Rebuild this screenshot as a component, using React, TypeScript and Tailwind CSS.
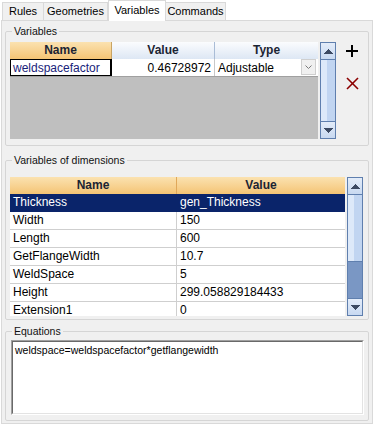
import React from 'react'

const dims: [string, string][] = [
  ['Thickness', 'gen_Thickness'],
  ['Width', '150'],
  ['Length', '600'],
  ['GetFlangeWidth', '10.7'],
  ['WeldSpace', '5'],
  ['Height', '299.058829184433'],
  ['Extension1', '0'],
]

function UpArrow() {
  return (
    <svg width="9" height="5" viewBox="0 0 9 5" shapeRendering="crispEdges">
      <polygon points="4.5,0 9,5 0,5" fill="#3c4a63" />
    </svg>
  )
}

function DownArrow() {
  return (
    <svg width="9" height="5" viewBox="0 0 9 5" shapeRendering="crispEdges">
      <polygon points="0,0 9,0 4.5,5" fill="#3c4a63" />
    </svg>
  )
}

function ScrollButton({ down }: { down?: boolean }) {
  return (
    <div className="h-[16px] shrink-0 flex items-center justify-center bg-linear-to-b from-[#e3ecf9] to-[#c8d9f1] border-[#5f7fae]">
      {down ? <DownArrow /> : <UpArrow />}
    </div>
  )
}

function Thumb({ h }: { h: string }) {
  return (
    <div className={`${h} flex border-y border-[#5f7fae]`}>
      <div className="w-[6px] bg-[#dde9f9]" />
      <div className="flex-1 bg-[#c1d5f1]" />
    </div>
  )
}

function Tab({ label, active, w, first }: { label: string; active?: boolean; w: string; first?: boolean }) {
  if (active)
    return (
      <div className={`${w} h-[21px] -mb-px relative z-10 bg-white border border-b-0 border-[#d9d9d9] flex items-center justify-center text-[11px] text-black pb-[2px]`}>
        {label}
      </div>
    )
  return (
    <div className={`${w} h-[18px] bg-[#f0f0f0] border-t border-r ${first ? 'border-l' : ''} border-[#d9d9d9] flex items-center justify-center text-[11px] text-black`}>
      {label}
    </div>
  )
}

export default function App() {
  return (
    <div className="w-[374px] h-[424px] bg-white overflow-hidden font-['Liberation_Sans',Arial,sans-serif] text-black">
      {/* tabs */}
      <div className="flex items-end h-[20px] pl-[2px]">
        <Tab label="Rules" w="w-[42px]" first />
        <Tab label="Geometries" w="w-[64px]" />
        <Tab label="Variables" w="w-[58px]" active />
        <Tab label="Commands" w="w-[60px]" />
      </div>

      {/* panel */}
      <div className="ml-[1px] w-[372px] h-[404px] border border-[#d9d9d9] bg-[#f0f0f0] px-[3px] pt-[4px]">
        {/* Variables */}
        <fieldset className="border border-[#d5d5d5] rounded-[2px] px-[4px] pt-[5px] pb-[6px]">
          <legend className="ml-[2px] px-[2px] text-[10.5px] leading-[12px] text-[#111]">Variables</legend>
          <div className="flex">
            <div className="w-[308px] h-[97px] bg-[#bfbfbf] flex flex-col">
              <div className="h-[17px] flex text-[12px] font-bold text-[#1b2433] leading-[17px]">
                <div className="w-[102px] text-center bg-linear-to-b from-[#fbe2b0] to-[#f4c474] border-r border-[#c8a464]">Name</div>
                <div className="w-[103px] text-center bg-linear-to-b from-[#fbfcfe] to-[#dde7f4] border-r border-[#a9bcd6]">Value</div>
                <div className="flex-1 text-center bg-linear-to-b from-[#fbfcfe] to-[#dde7f4]">Type</div>
              </div>
              <div className="h-[18px] flex bg-white border-b border-[#a0a0a0] text-[12px] leading-[16px]">
                <div className="w-[102px] border border-r-2 border-black pl-[2px] text-[#18227a]">weldspacefactor</div>
                <div className="w-[103px] border-r border-[#c8c8c8] text-right pr-[3px] pt-px">0.46728972</div>
                <div className="flex-1 flex items-start pl-[3px] pt-px">
                  <span className="flex-1">Adjustable</span>
                  <div className="w-[15px] h-[16px] -mt-px mr-[2px] bg-[#f0f0f0] border border-[#cfcfcf] flex items-center justify-center">
                    <svg width="7" height="4" viewBox="0 0 7 4">
                      <polyline points="0.5,0.5 3.5,3.5 6.5,0.5" fill="none" stroke="#7a7a7a" strokeWidth="1" />
                    </svg>
                  </div>
                </div>
              </div>
            </div>
            <div className="ml-[2px] w-[16px] h-[97px] border border-[#5f7fae] flex flex-col bg-[#c1d5f1]">
              <ScrollButton />
              <Thumb h="flex-1" />
              <ScrollButton down />
            </div>
            <div className="ml-[10px] pt-[3px] flex flex-col">
              <svg width="12" height="12" viewBox="0 0 12 12" shapeRendering="crispEdges">
                <rect x="5" y="0" width="2" height="12" fill="#000" />
                <rect x="0" y="5" width="12" height="2" fill="#000" />
              </svg>
              <svg className="mt-[20px]" width="13" height="13" viewBox="0 0 13 13">
                <line x1="1" y1="1" x2="12" y2="12" stroke="#8b0000" strokeWidth="1.6" />
                <line x1="12" y1="1" x2="1" y2="12" stroke="#8b0000" strokeWidth="1.6" />
              </svg>
            </div>
          </div>
        </fieldset>

        {/* Variables of dimensions */}
        <fieldset className="mt-[8px] border border-[#d5d5d5] rounded-[2px] px-[4px] pt-[11px] pb-[3px]">
          <legend className="ml-[2px] px-[2px] text-[10.5px] leading-[12px] text-[#111]">Variables of dimensions</legend>
          <div className="flex">
            <div className="w-[335px] h-[139px] bg-white flex flex-col overflow-hidden">
              <div className="h-[17px] shrink-0 flex text-[12px] font-bold text-[#1b2433] leading-[17px] bg-linear-to-b from-[#fbe2b0] to-[#f4c474]">
                <div className="w-[167px] text-center border-r border-[#e0a85a]">Name</div>
                <div className="flex-1 text-center">Value</div>
              </div>
              {dims.map(([n, v], i) => (
                <div
                  key={n}
                  className={`h-[18px] shrink-0 flex text-[12px] leading-[17px] border-b ${i === 0 ? 'bg-[#0a246a] text-white border-[#0a246a]' : 'border-[#cfcfcf]'}`}
                >
                  <div className={`w-[167px] pl-[3px] border-r ${i === 0 ? 'border-[#0a246a]' : 'border-[#cfcfcf]'}`}>{n}</div>
                  <div className="flex-1 pl-[3px]">{v}</div>
                </div>
              ))}
            </div>
            <div className="ml-[2px] w-[16px] h-[139px] border border-[#5f7fae] flex flex-col bg-[#7a97c4]">
              <ScrollButton />
              <Thumb h="h-[68px]" />
              <div className="flex-1" />
              <div className="border-t border-[#5f7fae]">
                <ScrollButton down />
              </div>
            </div>
          </div>
        </fieldset>

        {/* Equations */}
        <fieldset className="mt-[5px] border border-[#d5d5d5] rounded-[2px] px-[4px] pt-[3px] pb-[5px]">
          <legend className="ml-[2px] px-[2px] text-[10.5px] leading-[12px] text-[#111]">Equations</legend>
          <div className="h-[75px] ml-px border border-t-[#a0a0a0] border-l-[#a0a0a0] border-b-white border-r-white">
            <div className="h-full bg-white border border-t-[#696969] border-l-[#696969] border-b-[#e3e3e3] border-r-[#e3e3e3] pl-[2px] pt-[2px] text-[10.5px] leading-[13px]">
              weldspace=weldspacefactor*getflangewidth
            </div>
          </div>
        </fieldset>
      </div>
    </div>
  )
}
